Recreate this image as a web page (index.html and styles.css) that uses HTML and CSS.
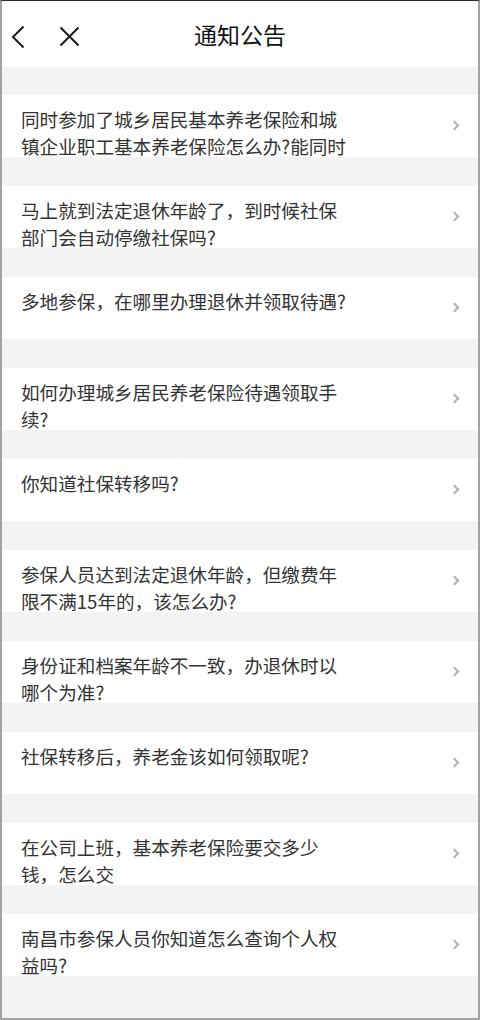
FILE: index.html
```html
<!DOCTYPE html>
<html lang="zh-CN">
<head>
<meta charset="utf-8">
<title>通知公告</title>
<link rel="stylesheet" href="styles.css">
</head>
<body>
<div class="frame">
  <header class="header">
    <div class="nav-left">
      <svg class="icon-back" width="14" height="24" viewBox="0 0 14 24"><polyline points="12.5,1.5 2,12 12.5,22.5" fill="none" stroke="#1a1a1a" stroke-width="2"/></svg>
      <svg class="icon-close" width="21" height="21" viewBox="0 0 21 21"><path d="M1.5 1.5 L19.5 19.5 M19.5 1.5 L1.5 19.5" fill="none" stroke="#1a1a1a" stroke-width="2"/></svg>
    </div>
    <h1 class="title">通知公告</h1>
  </header>
  <main class="list">
    <a class="item"><p class="text">同时参加了城乡居民基本养老保险和城镇企业职工基本养老保险怎么办?能同时领取两份养老金吗?</p><span class="arrow"></span></a>
    <a class="item"><p class="text">马上就到法定退休年龄了，到时候社保部门会自动停缴社保吗?</p><span class="arrow"></span></a>
    <a class="item"><p class="text">多地参保，在哪里办理退休并领取待遇?</p><span class="arrow"></span></a>
    <a class="item"><p class="text">如何办理城乡居民养老保险待遇领取手续?</p><span class="arrow"></span></a>
    <a class="item"><p class="text">你知道社保转移吗?</p><span class="arrow"></span></a>
    <a class="item"><p class="text">参保人员达到法定退休年龄，但缴费年限不满15年的，该怎么办?</p><span class="arrow"></span></a>
    <a class="item"><p class="text">身份证和档案年龄不一致，办退休时以哪个为准?</p><span class="arrow"></span></a>
    <a class="item"><p class="text">社保转移后，养老金该如何领取呢?</p><span class="arrow"></span></a>
    <a class="item"><p class="text">在公司上班，基本养老保险要交多少钱，怎么交</p><span class="arrow"></span></a>
    <a class="item"><p class="text">南昌市参保人员你知道怎么查询个人权益吗?</p><span class="arrow"></span></a>
  </main>
</div>
</body>
</html>
```

FILE: styles.css
```css
* { box-sizing: border-box; }
html, body { margin: 0; padding: 0; background: #fff; }
body { font-family: "Noto Sans CJK SC", "Noto Sans", sans-serif; }
.frame {
  width: 480px;
  height: 1020px;
  border-top: 1px solid #2a2a2a;
  border-left: 2px solid #a3a3a3;
  border-right: 2px solid #a3a3a3;
  border-bottom: 2px solid #a3a3a3;
  background: #fff;
  display: flex;
  flex-direction: column;
  overflow: hidden;
}
.header {
  position: relative;
  height: 66px;
  flex: none;
  display: flex;
  align-items: center;
  justify-content: center;
  background: #fff;
}
.nav-left {
  position: absolute;
  left: 9px;
  top: 23px;
  display: flex;
  align-items: center;
}
.icon-back { display: block; margin-top: 1px; }
.icon-close { display: block; margin-left: 34px; }
.title {
  margin: 0;
  margin-top: -1px;
  font-size: 23px;
  font-weight: 400;
  color: #111;
  line-height: 30px;
}
.list {
  flex: 1;
  background: #f3f3f3;
  padding-top: 28px;
  display: flex;
  flex-direction: column;
  gap: 29px;
}
.item {
  display: flex;
  align-items: flex-start;
  justify-content: space-between;
  height: 62px;
  background: #fff;
  overflow: hidden;
  padding: 10px 20px 0 19px;
  flex: none;
}
.text {
  margin: 0;
  width: 330px;
  font-size: 18.6px;
  line-height: 27px;
  color: #333;
}
.arrow {
  width: 7px;
  height: 7px;
  border-top: 2.2px solid #b3b3b3;
  border-right: 2.2px solid #b3b3b3;
  transform: rotate(45deg);
  margin-top: 17px;
  flex: none;
}
```
